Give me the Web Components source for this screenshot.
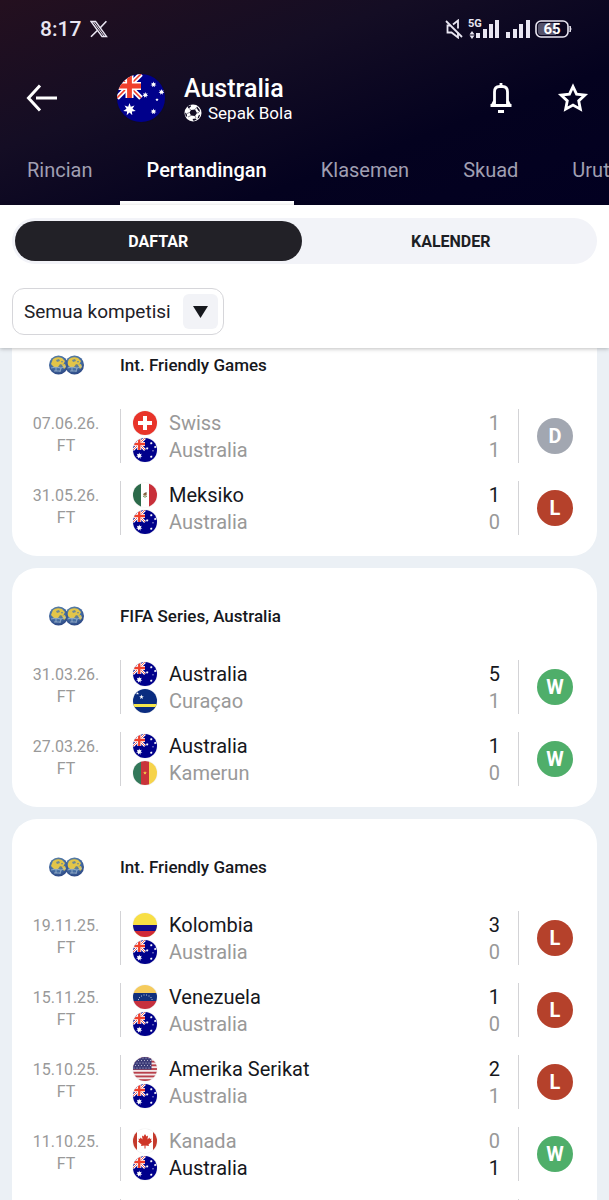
<!DOCTYPE html>
<html lang="id">
<head>
<meta charset="utf-8">
<meta name="viewport" content="width=device-width, initial-scale=1">
<title>Australia - Pertandingan</title>
<style>
    body {
        margin: 0;
        background: #ebf0f5;
        color: #16181d;
        font-family: Roboto, "Liberation Sans", sans-serif;
    }
</style>
</head>
<body>

<match-app>
    <status-bar slot="header" time="8:17" battery="65"></status-bar>
    <team-header slot="header" name="Australia" sport="Sepak Bola" flag="au"></team-header>
    <nav-tabs slot="header">
        <a href="#rincian">Rincian</a>
        <a href="#pertandingan" aria-current="page">Pertandingan</a>
        <a href="#klasemen">Klasemen</a>
        <a href="#skuad">Skuad</a>
        <a href="#urut">Urut</a>
    </nav-tabs>

    <segment-toggle slot="filters">
        <button type="button" aria-pressed="true">DAFTAR</button>
        <button type="button" aria-pressed="false">KALENDER</button>
    </segment-toggle>
    <filter-select slot="filters" label="Kompetisi" value="Semua kompetisi"></filter-select>

    <competition-card name="Int. Friendly Games">
        <match-row date="07.06.26." home="Swiss" home-flag="ch" home-score="1" away="Australia" away-flag="au" away-score="1" result="D"></match-row>
        <match-row date="31.05.26." home="Meksiko" home-flag="mx" home-score="1" away="Australia" away-flag="au" away-score="0" result="L"></match-row>
    </competition-card>

    <competition-card name="FIFA Series, Australia">
        <match-row date="31.03.26." home="Australia" home-flag="au" home-score="5" away="Curaçao" away-flag="cw" away-score="1" result="W"></match-row>
        <match-row date="27.03.26." home="Australia" home-flag="au" home-score="1" away="Kamerun" away-flag="cm" away-score="0" result="W"></match-row>
    </competition-card>

    <competition-card name="Int. Friendly Games">
        <match-row date="19.11.25." home="Kolombia" home-flag="co" home-score="3" away="Australia" away-flag="au" away-score="0" result="L"></match-row>
        <match-row date="15.11.25." home="Venezuela" home-flag="ve" home-score="1" away="Australia" away-flag="au" away-score="0" result="L"></match-row>
        <match-row date="15.10.25." home="Amerika Serikat" home-flag="us" home-score="2" away="Australia" away-flag="au" away-score="1" result="L"></match-row>
        <match-row date="11.10.25." home="Kanada" home-flag="ca" home-score="0" away="Australia" away-flag="au" away-score="1" result="W"></match-row>
        <match-row></match-row>
    </competition-card>
</match-app>

<script>
// ----------------------------------------------------------------------------
// MARK: Helpers
// ----------------------------------------------------------------------------

/**
 * @param {HTMLElement} element
 * @param {string} html
 * @returns ShadowRoot
 */
const attachTemplate = (element, html) => {
    const template = document.createElement('template')
    template.innerHTML = html
    const root = element.attachShadow({ mode: 'open' })
    root.appendChild(template.content.cloneNode(true))
    return root
}

/**
 * Points of an SVG star polygon
 *
 * @param {number} cx
 * @param {number} cy
 * @param {number} radius
 * @param {number} spikes
 * @param {number} ratio inner radius relative to the outer one
 * @returns string
 */
const starPoints = (cx, cy, radius, spikes = 5, ratio = 0.4) => {
    const points = []
    for (let i = 0; i < spikes * 2; i++) {
        const r = i % 2 === 0 ? radius : radius * ratio
        const angle = (Math.PI * i) / spikes - Math.PI / 2
        points.push(`${(cx + r * Math.cos(angle)).toFixed(2)},${(cy + r * Math.sin(angle)).toFixed(2)}`)
    }
    return points.join(' ')
}

const star = (...args) => `<polygon fill="#fff" points="${starPoints(...args)}"/>`

// ----------------------------------------------------------------------------
// MARK: Flag
// ----------------------------------------------------------------------------

const usStripes = [0, 1, 2, 3, 4, 5, 6].map((i) => `<rect y="${i * 7.4}" width="48" height="3.7" fill="#b8404a"/>`).join('')
const usStars = [2, 7, 12, 17, 22]
    .map((y, row) => [2, 8, 14, 20, 26, 32].map((x) => `<circle cx="${x + (row % 2) * 3}" cy="${y}" r="1.1" fill="#c8c9dd"/>`).join(''))
    .join('')

// All flags are square drawings, 48 units wide, cut to a circle by the host
const FLAGS = {
    au: `<rect width="48" height="48" fill="#00008b"/>
        <path d="M0 0l24 24M24 0L0 24" stroke="#fff" stroke-width="5"/>
        <path d="M0 0l24 24M24 0L0 24" stroke="#f0402c" stroke-width="1.6"/>
        <path d="M12.5 0v24M0 12h24" stroke="#fff" stroke-width="8"/>
        <path d="M12.5 0v24M0 12h24" stroke="#f0402c" stroke-width="4.8"/>
        ${star(12.5, 35.5, 6.4, 7, 0.48)}
        ${star(36.5, 10.5, 3, 7, 0.5)}${star(44.5, 18, 3, 7, 0.5)}${star(28.3, 21, 3, 7, 0.5)}
        ${star(36.5, 37.5, 3, 7, 0.5)}${star(40, 25.7, 1.8)}`,
    ch: `<rect width="48" height="48" fill="#e8342a"/>
        <path d="M24 10v28M10 24h28" stroke="#fff" stroke-width="8"/>`,
    mx: `<rect width="48" height="48" fill="#fff"/>
        <rect width="16" height="48" fill="#2c6a4a"/><rect x="32" width="16" height="48" fill="#c8303a"/>
        <path d="M20 26q4 5 8 0" fill="none" stroke="#6f8a55" stroke-width="2"/>
        <circle cx="24" cy="22.5" r="3.2" fill="#8d6a45"/><circle cx="26" cy="20" r="1.6" fill="#5a4630"/>`,
    cw: `<rect width="48" height="48" fill="#0a2c80"/><rect y="30" width="48" height="6" fill="#f6e64b"/>
        ${star(17, 16, 5)}${star(9, 9, 3)}`,
    cm: `<rect width="16" height="48" fill="#33785a"/><rect x="16" width="16" height="48" fill="#c9343a"/>
        <rect x="32" width="16" height="48" fill="#f6d34b"/>
        <polygon points="${starPoints(24, 24, 4)}" fill="#f6d34b"/>`,
    co: `<rect width="48" height="48" fill="#f8df45"/><rect y="24" width="48" height="12" fill="#100c8c"/>
        <rect y="36" width="48" height="12" fill="#d02a36"/>`,
    ve: `<rect width="48" height="16" fill="#f5cb5c"/><rect y="16" width="48" height="16" fill="#12307c"/>
        <rect y="32" width="48" height="16" fill="#c6303e"/>
        ${[[11, 29], [13, 25], [17, 22], [22, 20], [27, 20], [32, 22], [36, 25], [38, 29]].map(([x, y]) => star(x, y, 1.7)).join('')}`,
    us: `<rect width="48" height="48" fill="#f3e9ea"/>${usStripes}
        <rect width="37" height="25" fill="#3c3b78"/>${usStars}`,
    ca: `<rect width="48" height="48" fill="#fff"/><rect width="8" height="48" fill="#c43a2c"/>
        <rect x="40" width="8" height="48" fill="#c43a2c"/>
        <path fill="#cf3527" d="M24 10l3 5 3-2-1 8 4-4 1 3 3-1-1 4 2 2-7 6 1 3-7-1v6h-2v-6l-7 1 1-3-7-6 2-2-1-4 3 1 1-3 4 4-1-8 3 2z"/>`,
}

class FlagIcon extends HTMLElement {
    connectedCallback() {
        if (this.shadowRoot) {
            return
        }
        attachTemplate(this, `
            <style>
                :host {
                    display: block;
                    width: var(--flag-size, 24px);
                    height: var(--flag-size, 24px);
                    border-radius: 50%;
                    overflow: hidden;
                    box-shadow: 0 0 1px rgb(0 0 0 / 25%);
                }
                svg {
                    display: block;
                    width: 100%;
                    height: 100%;
                }
            </style>
            <svg viewBox="0 0 48 48" aria-hidden="true">${FLAGS[this.getAttribute('code')] ?? ''}</svg>
        `)
    }
}

customElements.define('flag-icon', FlagIcon)

// ----------------------------------------------------------------------------
// MARK: App
// ----------------------------------------------------------------------------

class MatchApp extends HTMLElement {
    constructor() {
        super()
        attachTemplate(this, `
            <style>
                :host {
                    display: flex;
                    flex-direction: column;
                    height: 100vh;
                    overflow: hidden;
                }
                header {
                    flex: none;
                    background: linear-gradient(160deg, #24101f 0%, #140d24 35%, #04021f 68%, #020021 100%);
                    color: #fff;
                }
                .filters {
                    position: relative;
                    z-index: 1;
                    flex: none;
                    display: flex;
                    flex-direction: column;
                    align-items: flex-start;
                    gap: 24px;
                    padding: 13px 12px;
                    background: #fff;
                    box-shadow: 0 1px 4px rgb(0 0 0 / 25%);
                }
                /* The list is scrolled a little way under the filters */
                main {
                    flex: none;
                    display: flex;
                    flex-direction: column;
                    gap: 12px;
                    margin-top: -31px;
                    padding: 0 12px;
                }
            </style>
            <header><slot name="header"></slot></header>
            <section class="filters"><slot name="filters"></slot></section>
            <main><slot></slot></main>
        `)
    }
}

customElements.define('match-app', MatchApp)

// ----------------------------------------------------------------------------
// MARK: Status bar
// ----------------------------------------------------------------------------

class StatusBar extends HTMLElement {
    connectedCallback() {
        if (this.shadowRoot) {
            return
        }
        attachTemplate(this, `
            <style>
                :host {
                    display: flex;
                    align-items: center;
                    height: 58px;
                    padding: 0 37px 0 40px;
                    color: #e9e6f2;
                }
                time {
                    font-size: 21px;
                    font-weight: 500;
                    margin-right: 9px;
                }
                svg {
                    display: block;
                    flex: none;
                }
                .system {
                    display: flex;
                    align-items: center;
                    gap: 5px;
                    margin-left: auto;
                }
                .signals {
                    display: flex;
                    gap: 7px;
                }
                text {
                    font-weight: 700;
                    fill: currentColor;
                }
                .level {
                    fill: #fff;
                }
            </style>
            <time>${this.getAttribute('time')}</time>
            <svg width="18" height="18" viewBox="0 0 18 18" fill="none" stroke="currentColor" aria-hidden="true">
                <path stroke-width="1.3" d="M1 1.5h4.6l11 15H12z"/>
                <path stroke-width="1.6" d="M16.4 1.2l-6.6 7M7.6 10.2L1 16.8"/>
                <path stroke-width="1" d="M3.6 2l10.4 14"/>
            </svg>
            <div class="system">
                <svg width="18" height="20" viewBox="0 0 18 20" fill="none" stroke="currentColor" stroke-width="1.8" aria-hidden="true">
                    <path d="M5 6.5H2.500v7h4l6.500 5v-5M13 9.500V1.500L8 5.500"/>
                    <path d="M1 2l16 16"/>
                </svg>
                <div class="signals">
                    <svg width="31" height="22" viewBox="0 0 31 22" aria-label="5G">
                        <text x="0" y="9" font-size="11">5G</text>
                        <path fill="currentColor" d="M1.500 16.500L4 13l2.500 3.500zM1.500 17.500h5L4 21zM8 15h4v5H8zM15 11h4v9h-4zM21 6h4v14h-4zM27 2h4v18h-4z"/>
                    </svg>
                    <svg width="24" height="22" viewBox="0 0 24 22" aria-hidden="true">
                        <path fill="currentColor" d="M0 14h4v6H0zM7 11h4v9H7zM13 6h4v14h-4zM20 2h4v18h-4z"/>
                    </svg>
                </div>
                <svg width="37" height="18" viewBox="0 0 37 18" aria-label="Baterai">
                    <rect x="1" y="1" width="32" height="16" rx="5" fill="none" stroke="currentColor" stroke-width="1.6"/>
                    <path d="M6 3h15v12H6a3 3 0 0 1-3-3V6a3 3 0 0 1 3-3z" fill="#55526a"/>
                    <path d="M35 6q2 3 0 6z" fill="currentColor" stroke="currentColor"/>
                    <text class="level" x="17" y="14" font-size="15" text-anchor="middle">${this.getAttribute('battery')}</text>
                </svg>
            </div>
        `)
    }
}

customElements.define('status-bar', StatusBar)

// ----------------------------------------------------------------------------
// MARK: Team header
// ----------------------------------------------------------------------------

class TeamHeader extends HTMLElement {
    connectedCallback() {
        if (this.shadowRoot) {
            return
        }
        attachTemplate(this, `
            <style>
                :host {
                    display: flex;
                    align-items: center;
                    height: 80px;
                    padding: 0 20px 0 26px;
                    --flag-size: 48px;
                }
                button {
                    display: grid;
                    place-items: center;
                    padding: 0;
                    border: 0;
                    background: none;
                    color: inherit;
                    cursor: pointer;
                }
                svg {
                    display: block;
                }
                .back {
                    margin-right: 59px;
                }
                .title {
                    flex: 1;
                    margin-left: 19px;
                    padding-top: 3px;
                }
                h1 {
                    margin: 0;
                    font-size: 25px;
                    line-height: 26px;
                    font-weight: 500;
                }
                p {
                    display: flex;
                    align-items: center;
                    gap: 6px;
                    margin: 0;
                    font-size: 17px;
                    line-height: 22px;
                }
                .actions {
                    display: flex;
                    gap: 40px;
                }
            </style>
            <button class="back" type="button" aria-label="Kembali">
                <svg width="32" height="28" viewBox="0 0 32 28" fill="none" stroke="currentColor" stroke-width="3">
                    <path d="M14 1.500L2.500 14 14 26.500M10 14h21"/>
                </svg>
            </button>
            <flag-icon code="${this.getAttribute('flag')}"></flag-icon>
            <div class="title">
                <h1>${this.getAttribute('name')}</h1>
                <p>
                    <svg width="18" height="18" viewBox="0 0 18 18" aria-hidden="true">
                        <circle cx="9" cy="9" r="8.500" fill="#fff"/>
                        <path fill="#120c24" d="M7 6l4-.5 2 3.500-2 3-4-.500-1.500-3zM3.500 2.500L7 1.200 6.800 2.800 4.500 4.500zM13 2.500l2.500 3 .5 2.500-1.500-1-2-3zM1 8.500l1.700 1.200.5 3-1.500-.500zM8.500 15l3-.5 1.200 1-3 1.500zM14.500 11.500l1.700-1-1.200 3.500-1.500.5z"/>
                        <path stroke="#120c24" stroke-width=".5" d="M7 6L5 4.500M11 5.500l1.500-2M13 9l2-.5M11 12l1 2M7 11.500L4 13M5.500 8.500L3 9.500"/>
                    </svg>
                    ${this.getAttribute('sport')}
                </p>
            </div>
            <div class="actions">
                <button type="button" aria-label="Notifikasi">
                    <svg width="32" height="32" viewBox="0 0 32 32" fill="none" stroke="currentColor" stroke-width="2.800">
                        <path d="M16 1v4M9.500 23V10q0-5.500 5-5.500h3q5 0 5 5.500v13"/>
                        <path d="M5.500 23.500h21M9.500 19l-2 4M22.500 19l2 4"/>
                        <path d="M13 29.500h6" stroke-width="3"/>
                    </svg>
                </button>
                <button type="button" aria-label="Favorit">
                    <svg width="32" height="32" viewBox="0 0 32 32" fill="none" stroke="currentColor" stroke-width="2.800">
                        <polygon points="${starPoints(16, 17, 12.5, 5, 0.48)}"/>
                    </svg>
                </button>
            </div>
        `)
    }
}

customElements.define('team-header', TeamHeader)

// ----------------------------------------------------------------------------
// MARK: Tabs
// ----------------------------------------------------------------------------

class NavTabs extends HTMLElement {
    constructor() {
        super()
        attachTemplate(this, `
            <style>
                :host {
                    display: block;
                }
                nav {
                    display: flex;
                    height: 67px;
                    overflow: hidden;
                }
                ::slotted(a) {
                    flex: none;
                    box-sizing: border-box;
                    height: 67px;
                    padding: 0 27px;
                    border-bottom: 4px solid transparent;
                    color: #a09fb2;
                    font-size: 20px;
                    line-height: 64px;
                    text-decoration: none;
                }
                ::slotted(a[aria-current]) {
                    border-color: #fff;
                    color: #fff;
                    font-weight: 500;
                }
            </style>
            <nav><slot></slot></nav>
        `)
    }
}

customElements.define('nav-tabs', NavTabs)

// ----------------------------------------------------------------------------
// MARK: Segment toggle
// ----------------------------------------------------------------------------

class SegmentToggle extends HTMLElement {
    constructor() {
        super()
        attachTemplate(this, `
            <style>
                :host {
                    display: grid;
                    grid-template-columns: 1fr 1fr;
                    gap: 6px;
                    align-self: stretch;
                    padding: 3px;
                    border-radius: 23px;
                    background: #f2f3f8;
                }
                ::slotted(button) {
                    height: 40px;
                    padding: 0;
                    border: 0;
                    border-radius: 20px;
                    background: none;
                    color: #1d1e24;
                    font: 700 16px Roboto, sans-serif;
                    cursor: pointer;
                }
                ::slotted(button[aria-pressed="true"]) {
                    background: #222127;
                    color: #fff;
                }
            </style>
            <slot></slot>
        `)

        this.addEventListener('click', (event) => {
            const clicked = event.target.closest('button')
            if (!clicked) {
                return
            }
            for (const button of this.querySelectorAll('button')) {
                button.setAttribute('aria-pressed', button === clicked)
            }
        })
    }
}

customElements.define('segment-toggle', SegmentToggle)

// ----------------------------------------------------------------------------
// MARK: Filter select
// ----------------------------------------------------------------------------

class FilterSelect extends HTMLElement {
    connectedCallback() {
        if (this.shadowRoot) {
            return
        }
        attachTemplate(this, `
            <style>
                :host {
                    display: inline-grid;
                    align-items: center;
                }
                select, .arrow {
                    grid-area: 1 / 1;
                }
                select {
                    appearance: none;
                    height: 47px;
                    padding: 0 52px 0 11px;
                    border: 1px solid #d6d6da;
                    border-radius: 12px;
                    background: #fff;
                    color: #222127;
                    font: 19px Roboto, sans-serif;
                }
                .arrow {
                    display: grid;
                    place-items: center;
                    justify-self: end;
                    width: 35px;
                    height: 35px;
                    margin-right: 6px;
                    border-radius: 6px;
                    background: #f2f3f7;
                    pointer-events: none;
                }
            </style>
            <select aria-label="${this.getAttribute('label')}">
                <option>${this.getAttribute('value')}</option>
            </select>
            <span class="arrow">
                <svg width="15" height="12" viewBox="0 0 15 12" aria-hidden="true"><path d="M0 0h15L7.500 12z" fill="#16181d"/></svg>
            </span>
        `)
    }
}

customElements.define('filter-select', FilterSelect)

// ----------------------------------------------------------------------------
// MARK: Competition card
// ----------------------------------------------------------------------------

const globe = (x) => `
    <g transform="translate(${x} 0)">
        <circle cx="9.500" cy="10" r="9.500" fill="url(#globe)"/>
        <path fill="#e3c548" d="M4 4q4-3 9-1l3 3-2 4-3-1-2 3-4 0-3-3zM13 10l3-1 1 3-2 2z"/>
        <path fill="#6f8a94" d="M7 5l3-1 1 2-3 1zM12 6l2 0-1 2z"/>
        <path fill="none" stroke="#a9bfd2" stroke-width=".7" d="M2 13l5-1 5 1 5-2M7 12v4M12 13l-1 4M5 16h6"/>
    </g>`

class CompetitionCard extends HTMLElement {
    connectedCallback() {
        if (this.shadowRoot) {
            return
        }
        attachTemplate(this, `
            <style>
                :host {
                    display: block;
                    padding-bottom: 21px;
                    border-radius: 25px;
                    background: #fff;
                }
                .heading {
                    display: grid;
                    grid-template-columns: 108px 1fr;
                    align-items: center;
                    box-sizing: border-box;
                    height: 92px;
                    padding-top: 3px;
                }
                svg {
                    justify-self: center;
                }
                h2 {
                    margin: 0;
                    font-size: 17px;
                    line-height: 22px;
                    font-weight: 500;
                }
                .rows {
                    display: grid;
                    gap: 18px;
                }
            </style>
            <div class="heading">
                <svg width="35" height="20" viewBox="0 0 35 20" aria-hidden="true">
                    <defs>
                        <radialGradient id="globe" cx="45%" cy="35%" r="70%">
                            <stop offset="0" stop-color="#a09a62"/>
                            <stop offset=".5" stop-color="#4a74a8"/>
                            <stop offset="1" stop-color="#263e7c"/>
                        </radialGradient>
                    </defs>
                    ${globe(16)}${globe(0)}
                </svg>
                <h2>${this.getAttribute('name')}</h2>
            </div>
            <div class="rows"><slot></slot></div>
        `)
    }
}

customElements.define('competition-card', CompetitionCard)

// ----------------------------------------------------------------------------
// MARK: Match row
// ----------------------------------------------------------------------------

class MatchRow extends HTMLElement {
    #team(side, won) {
        const name = this.getAttribute(side)
        if (!name) {
            return ''
        }
        return `
            <div class="team ${won ? 'won' : ''}">
                <flag-icon code="${this.getAttribute(`${side}-flag`)}"></flag-icon>
                <span class="name">${name}</span>
                <span>${this.getAttribute(`${side}-score`)}</span>
            </div>
        `
    }

    connectedCallback() {
        if (this.shadowRoot) {
            return
        }
        const date = this.getAttribute('date')
        const result = this.getAttribute('result')
        const home = Number(this.getAttribute('home-score'))
        const away = Number(this.getAttribute('away-score'))

        attachTemplate(this, `
            <style>
                :host {
                    display: grid;
                    grid-template-columns: 108px 1fr 78px;
                    height: 54px;
                    color: #999;
                }
                .date {
                    padding-top: 4px;
                    font-size: 16px;
                    line-height: 22px;
                    text-align: center;
                }
                .date span {
                    display: block;
                }
                .teams {
                    padding: 0 18px 0 12px;
                    border: solid #d3d3d6;
                    border-width: 0 1px;
                }
                .team {
                    display: flex;
                    align-items: center;
                    gap: 12px;
                    height: 27px;
                    font-size: 20px;
                    line-height: 28px;
                }
                .won {
                    color: #16181d;
                }
                .name {
                    flex: 1;
                }
                .result {
                    align-self: center;
                    width: 36px;
                    margin-left: 18px;
                    border-radius: 50%;
                    color: #fff;
                    font-size: 20px;
                    line-height: 36px;
                    font-weight: 700;
                    text-align: center;
                }
                .W { background: #4fae6a; }
                .L { background: #b5412b; }
                .D { background: #a2a7b1; }
            </style>
            <div class="date">${date ? `<span>${date}</span><span>FT</span>` : ''}</div>
            <div class="teams">
                ${this.#team('home', home > away)}
                ${this.#team('away', away > home)}
            </div>
            ${result ? `<div class="result ${result}">${result}</div>` : ''}
        `)
    }
}

customElements.define('match-row', MatchRow)
</script>
</body>
</html>
